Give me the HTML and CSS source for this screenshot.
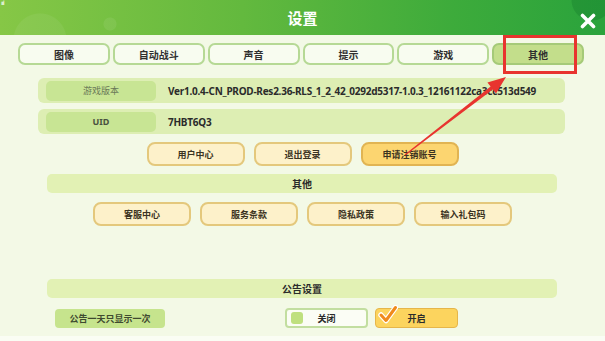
FILE: index.html
```html
<!DOCTYPE html>
<html lang="zh-CN">
<head>
  <meta charset="UTF-8">
  <meta name="viewport" content="width=device-width, initial-scale=1.0">
  <title>设置</title>
  <link rel="stylesheet" href="styles.css">
</head>
<body>
  <div class="window">
    <div class="header">
      <span class="signal">ıııl</span>
      <div class="title">设置</div>
      <div class="close">
        <svg width="16" height="16" viewBox="0 0 16 16">
          <path d="M2.5 2.5 L13.5 13.5 M13.5 2.5 L2.5 13.5" stroke="#fff" stroke-width="3.6" stroke-linecap="round"/>
        </svg>
      </div>
    </div>

    <div class="tabs">
      <div class="tab">图像</div>
      <div class="tab">自动战斗</div>
      <div class="tab">声音</div>
      <div class="tab">提示</div>
      <div class="tab">游戏</div>
      <div class="tab active">其他</div>
    </div>

    <div class="info">
      <div class="info-row">
        <div class="info-label">游戏版本</div>
        <div class="info-value">Ver1.0.4-CN_PROD-Res2.36-RLS_1_2_42_0292d5317-1.0.3_12161122ca3cc513d549</div>
      </div>
      <div class="info-row">
        <div class="info-label dark">UID</div>
        <div class="info-value">7HBT6Q3</div>
      </div>
    </div>

    <div class="btn-row">
      <div class="btn">用户中心</div>
      <div class="btn">退出登录</div>
      <div class="btn hot">申请注销账号</div>
    </div>

    <div class="section">其他</div>

    <div class="btn-row">
      <div class="btn">客服中心</div>
      <div class="btn">服务条款</div>
      <div class="btn">隐私政策</div>
      <div class="btn">输入礼包码</div>
    </div>

    <div class="section notice-title">公告设置</div>

    <div class="notice-row">
      <div class="notice-label">公告一天只显示一次</div>
      <div class="toggles">
        <div class="toggle off"><span class="dot"></span>关闭</div>
        <div class="toggle on">
          <svg class="check" width="20" height="20" viewBox="0 0 20 20">
            <path d="M3 10 L8 15.5 L17.5 2.5" fill="none" stroke="#fff" stroke-width="5.5" stroke-linecap="round" stroke-linejoin="round"/>
            <path d="M3 10 L8 15.5 L17.5 2.5" fill="none" stroke="#f08a1c" stroke-width="3" stroke-linecap="round" stroke-linejoin="round"/>
          </svg>
          开启
        </div>
      </div>
    </div>

    <!-- annotation over the screenshot -->
    <div class="mark-box"></div>
    <svg class="mark-arrow" width="605" height="341" viewBox="0 0 605 341">
      <polygon points="404.7,154.6 490.6,86.6 487.4,82.4 506,77 496,93.6 492.8,89.4 405.3,155.4" fill="#e8342f"/>
    </svg>
  </div>
</body>
</html>
```

FILE: styles.css
```css
body {
  margin: 0;
  font-family: "Noto Sans CJK SC", "Noto Sans", sans-serif;
  color: #333;
}

.window {
  position: relative;
  width: 605px;
  height: 341px;
  overflow: hidden;
  background: #f3f9e6;
  box-sizing: border-box;
  border-bottom: 5px solid #fafdf4;
}

.header {
  position: relative;
  height: 35px;
  display: grid;
  grid-template-columns: 1fr auto 1fr;
  align-items: center;
  background:
    radial-gradient(circle at 40px 40px, rgba(255, 255, 255, 0.06) 0 26px, transparent 27px),
    radial-gradient(circle at 110px 24px, rgba(255, 255, 255, 0.07) 0 6px, transparent 7px),
    radial-gradient(circle at 592px 0px, rgba(0, 90, 30, 0.2) 0 20px, transparent 21px),
    linear-gradient(90deg, #86c746 0%, #63b93e 40%, #3dab3b 75%, #2aa33c 100%);
}

.signal {
  position: absolute;
  left: 1px;
  top: 0;
  color: #fff;
  font-family: "DejaVu Sans", sans-serif;
  font-size: 6px;
  line-height: 6px;
  letter-spacing: -1px;
}

.title {
  grid-column: 2;
  color: #fff;
  font-weight: 700;
  font-size: 15px;
}

.close {
  grid-column: 3;
  justify-self: end;
  margin-right: 9px;
  height: 16px;
}

.tabs {
  display: grid;
  grid-template-columns: repeat(6, 1fr);
  gap: 3px;
  margin: 8px 21px 0 18px;
}

.tab {
  height: 22px;
  box-sizing: border-box;
  border: 2px solid #b6d995;
  border-radius: 7px;
  background: #f8fcf0;
  display: flex;
  align-items: center;
  justify-content: center;
  font-size: 10px;
  font-weight: 700;
  color: #2f2f2f;
}

.tab.active {
  background: #c3de8b;
  border-color: #a5ca78;
}

.info {
  display: flex;
  flex-direction: column;
  gap: 6px;
  margin: 13px 40px 0 38px;
}

.info-row {
  height: 25px;
  display: flex;
  align-items: center;
  padding-left: 8px;
  background: #ddeeb3;
  border-radius: 6px;
}

.info-label {
  width: 110px;
  height: 20px;
  flex: none;
  display: flex;
  align-items: center;
  justify-content: center;
  background: #c8e594;
  border-radius: 5px;
  font-size: 9px;
  color: #6b7a58;
}

.info-label.dark {
  font-family: "Noto Sans", sans-serif;
  font-weight: 700;
  color: #4a5240;
}

.info-value {
  margin-left: 12px;
  font-family: "Noto Sans", sans-serif;
  font-weight: 700;
  font-size: 10px;
  letter-spacing: -0.25px;
  color: #2b2b2b;
  white-space: nowrap;
}

.btn-row {
  display: flex;
  justify-content: center;
  gap: 9px;
  margin-top: 8px;
}

.btn-row + .section + .btn-row {
  margin-top: 9px;
}

.btn {
  width: 98px;
  height: 24px;
  box-sizing: border-box;
  display: flex;
  align-items: center;
  justify-content: center;
  background: #fdf1ca;
  border: 2px solid #e4c87c;
  border-radius: 8px;
  font-size: 9px;
  font-weight: 700;
  color: #3b3322;
}

.btn.hot {
  background: #fcd570;
  border-color: #e1b452;
}

.section {
  height: 19px;
  margin: 8px 48px 0 47px;
  display: flex;
  align-items: center;
  justify-content: center;
  background: #e2f1b4;
  border-radius: 5px;
  font-size: 10px;
  font-weight: 700;
  color: #2b2b2b;
}

.notice-title {
  margin-top: 53px;
}

.notice-row {
  display: flex;
  align-items: center;
  margin: 10px 0 0 55px;
}

.notice-label {
  width: 110px;
  height: 19px;
  display: flex;
  align-items: center;
  justify-content: center;
  background: #c6e48d;
  border-radius: 4px;
  font-size: 9px;
  font-weight: 700;
  color: #3f4a30;
}

.toggles {
  display: flex;
  gap: 7px;
  margin-left: 120px;
}

.toggle {
  position: relative;
  width: 83px;
  height: 20px;
  box-sizing: border-box;
  display: flex;
  align-items: center;
  justify-content: center;
  border-radius: 4px;
  font-size: 9px;
  font-weight: 700;
  color: #2b2b2b;
}

.toggle.off {
  background: #fbfdf5;
  border: 2px solid #c2dea0;
}

.toggle.on {
  background: #fcd45e;
  border: 1px solid #e6b64a;
}

.dot {
  position: absolute;
  left: 4px;
  top: 2px;
  width: 12px;
  height: 12px;
  background: #bfe07f;
  border-radius: 3px;
}

.check {
  position: absolute;
  left: 2px;
  top: -4px;
}

.mark-box {
  position: absolute;
  left: 503px;
  top: 35px;
  width: 74px;
  height: 39px;
  box-sizing: border-box;
  border: 3px solid #e8342f;
}

.mark-arrow {
  position: absolute;
  left: 0;
  top: 0;
  pointer-events: none;
}
```
